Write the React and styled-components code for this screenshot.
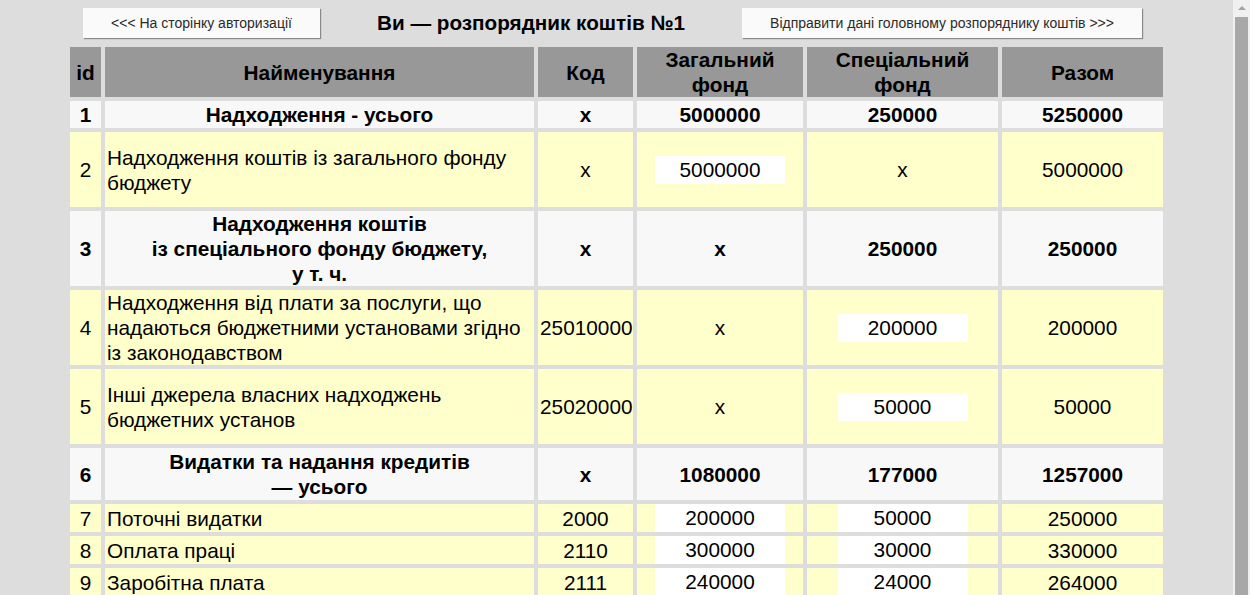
import React from "react";
import styled, { createGlobalStyle } from "styled-components";

const GlobalStyle = createGlobalStyle`
  html, body {
    margin: 0;
    padding: 0;
    height: 595px;
    overflow: hidden;
    background: #dddddd;
    font-family: "Liberation Sans", Arial, sans-serif;
  }
`;

const Screen = styled.div`
  display: flex;
  height: 595px;
  overflow: hidden;
`;

const Page = styled.div`
  flex: 1;
  padding: 8px;
  overflow: hidden;
`;

const ScrollBar = styled.div`
  width: 17px;
  flex: none;
  display: flex;
  flex-direction: column;
  background: #f0f0f0;
`;

const ScrollArrow = styled.div`
  height: 16px;
  display: flex;
  align-items: center;
  justify-content: center;
  &::before {
    content: "";
    border-left: 4px solid transparent;
    border-right: 4px solid transparent;
    border-bottom: 4px solid #a3a3a3;
  }
`;

const ScrollThumb = styled.div`
  flex: 1;
  margin: 1px 2px 0 2px;
  background: #a8a8a8;
`;

const TopBar = styled.div`
  display: flex;
  align-items: center;
  height: 30px;
  padding-left: 75px;
`;

const NavButton = styled.button`
  width: ${(p) => p.$w}px;
  height: 30px;
  flex: none;
  border: none;
  background: #fafafa;
  box-shadow: 1px 1px 1px #8a8a8a;
  font-family: "Liberation Sans", Arial, sans-serif;
  font-size: 14px;
  color: #2a2a2a;
  padding: 0;
  cursor: pointer;
`;

const Title = styled.h1`
  width: 422px;
  flex: none;
  margin: 0;
  text-align: center;
  font-size: 20.7px;
  font-weight: bold;
  color: #000;
`;

const Table = styled.table`
  margin: 5px auto 0;
  width: 1101px;
  table-layout: fixed;
  border-collapse: separate;
  border-spacing: 4px;
  font-size: 20.8px;
  color: #000;
`;

const HeadCell = styled.th`
  height: 50px;
  padding: 0 2px;
  background: #989898;
  line-height: 25px;
  font-weight: bold;
  text-align: center;
  vertical-align: middle;
`;

const Row = styled.tr`
  height: ${(p) => p.$h}px;
  background: ${(p) => (p.$sum ? "#f8f8f8" : "#ffffcc")};
  font-weight: ${(p) => (p.$sum ? "bold" : "normal")};
`;

const Cell = styled.td`
  padding: 0 2px;
  line-height: 25px;
  text-align: ${(p) => (p.$left ? "left" : "center")};
  vertical-align: middle;
  white-space: ${(p) => (p.$nowrap ? "nowrap" : "normal")};
`;

const InputCell = styled.td`
  padding: 0;
  text-align: center;
  vertical-align: middle;
`;

const NumInput = styled.input`
  box-sizing: border-box;
  width: 130px;
  height: 28px;
  border: none;
  outline: none;
  padding: 0;
  background: #fff;
  font-family: "Liberation Sans", Arial, sans-serif;
  font-size: 20.8px;
  text-align: center;
  color: #000;
  vertical-align: middle;
`;

const rows = [
  { id: 1, sum: true, h: 27, name: ["Надходження - усього"], code: "x", g: "5000000", s: "250000", t: "5250000" },
  { id: 2, h: 75, name: ["Надходження коштів із загального фонду бюджету"], code: "x", g: { v: "5000000" }, s: "x", t: "5000000" },
  { id: 3, sum: true, h: 75, name: ["Надходження коштів", "із спеціального фонду бюджету,", "у т. ч."], code: "x", g: "x", s: "250000", t: "250000" },
  { id: 4, h: 74, name: ["Надходження від плати за послуги, що надаються бюджетними установами згідно із законодавством"], code: "25010000", g: "x", s: { v: "200000" }, t: "200000" },
  { id: 5, h: 75, name: ["Інші джерела власних надходжень бюджетних установ"], code: "25020000", g: "x", s: { v: "50000" }, t: "50000" },
  { id: 6, sum: true, h: 52, name: ["Видатки та надання кредитів", "— усього"], code: "x", g: "1080000", s: "177000", t: "1257000" },
  { id: 7, h: 28, name: ["Поточні видатки"], code: "2000", g: { v: "200000" }, s: { v: "50000" }, t: "250000" },
  { id: 8, h: 28, name: ["Оплата праці"], code: "2110", g: { v: "300000" }, s: { v: "30000" }, t: "330000" },
  { id: 9, h: 28, name: ["Заробітна плата"], code: "2111", g: { v: "240000" }, s: { v: "24000" }, t: "264000" },
];

// a cell holds either plain text or an editable amount
const Value = ({ val }) =>
  typeof val === "object" ? (
    <InputCell>
      <NumInput defaultValue={val.v} />
    </InputCell>
  ) : (
    <Cell>{val}</Cell>
  );

const App = () => {
  return (
    <Screen>
      <GlobalStyle />
      <Page>
        <TopBar>
          <NavButton $w={237}>&lt;&lt;&lt; На сторінку авторизації</NavButton>
          <Title>Ви — розпорядник коштів №1</Title>
          <NavButton $w={400}>Відправити дані головному розпоряднику коштів &gt;&gt;&gt;</NavButton>
        </TopBar>
        <Table>
          <colgroup>
            <col style={{ width: 31 }} />
            <col style={{ width: 429 }} />
            <col style={{ width: 95 }} />
            <col style={{ width: 166 }} />
            <col style={{ width: 191 }} />
            <col style={{ width: 161 }} />
          </colgroup>
          <thead>
            <tr>
              <HeadCell>id</HeadCell>
              <HeadCell>Найменування</HeadCell>
              <HeadCell>Код</HeadCell>
              <HeadCell>Загальний фонд</HeadCell>
              <HeadCell>Спеціальний фонд</HeadCell>
              <HeadCell>Разом</HeadCell>
            </tr>
          </thead>
          <tbody>
            {rows.map((r) => (
              <Row key={r.id} $h={r.h} $sum={r.sum}>
                <Cell>{r.id}</Cell>
                <Cell $left={!r.sum}>
                  {r.name.map((line, i) => (
                    <React.Fragment key={i}>
                      {i > 0 && <br />}
                      {line}
                    </React.Fragment>
                  ))}
                </Cell>
                <Cell $nowrap>{r.code}</Cell>
                <Value val={r.g} />
                <Value val={r.s} />
                <Cell>{r.t}</Cell>
              </Row>
            ))}
          </tbody>
        </Table>
      </Page>
      <ScrollBar>
        <ScrollArrow />
        <ScrollThumb />
      </ScrollBar>
    </Screen>
  );
};

export default App;
